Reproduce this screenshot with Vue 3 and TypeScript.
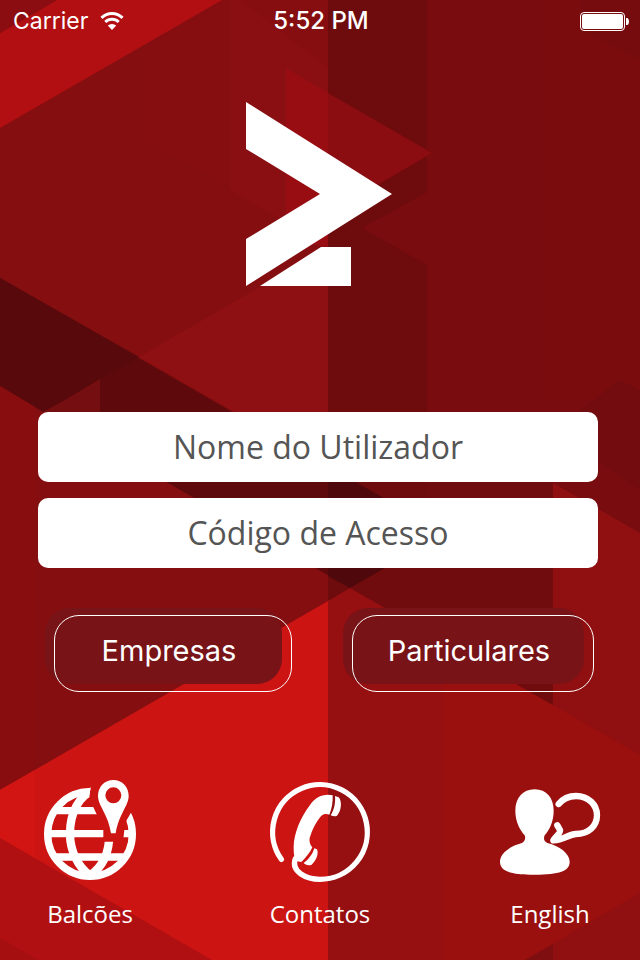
<script setup lang="ts">
import { ref } from 'vue'

interface Facet {
  points: string
  fill: string
}

const username = ref('')
const accessCode = ref('')

const facets: Facet[] = [
  { points: '0,0 328,0 328,960 0,960', fill: '#840e10' },
  { points: '145,0 328,0 328,247 200,170 145,140', fill: '#860e11' },
  { points: '230,0 328,0 328,247 286,222 230,190', fill: '#8a0f12' },
  { points: '240,0 328,0 328,68', fill: '#860e11' },
  { points: '328,0 427,0 427,600 328,600', fill: '#6e0b0d' },
  { points: '427,0 640,0 640,960 427,960', fill: '#780c0e' },
  { points: '545,0 640,0 640,400 545,400', fill: '#7b0c0e' },
  { points: '580,30 640,60 640,0 580,0', fill: '#760c0e' },
  { points: '0,33 57,0 222,0 0,128', fill: '#b20f12' },
  { points: '0,0 57,0 0,33', fill: '#8b0d11' },
  { points: '286,68 328,93 328,247 286,240', fill: '#980d12' },
  { points: '328,93 432,153 328,214', fill: '#8c0d11' },
  { points: '362,228 427,192 427,265', fill: '#780c0e' },
  { points: '139,357 328,247 328,466', fill: '#8f1012' },
  { points: '0,278 382,498 390,565 350,588 0,386', fill: '#5e0a0d' },
  { points: '0,278 139,357 43,412 0,386', fill: '#58090c' },
  { points: '328,466 427,523 427,544 350,588 328,576', fill: '#4f080b' },
  { points: '65,400 100,379 100,444 43,412', fill: '#750e10' },
  { points: '553,430 620,380 640,390 640,490', fill: '#720c0e' },
  { points: '427,430 553,430 553,705 350,588 427,544', fill: '#700c0e' },
  { points: '553,483 640,533 640,960 553,960', fill: '#900f11' },
  { points: '0,386 35,407 35,960 0,960', fill: '#870d0f' },
  { points: '0,790 328,601 328,960 0,960', fill: '#cc1413' },
  { points: '0,790 35,770 35,858 0,838', fill: '#d21512' },
  { points: '328,601 350,588 553,705 640,755 640,960 328,960', fill: '#960f11' },
  { points: '444,642 516,684 640,755 640,893 525,960 444,960', fill: '#9a100f' },
  { points: '516,684 553,705 553,660 516,660', fill: '#700c0e' },
  { points: '0,838 212,960 0,960', fill: '#b01011' },
  { points: '0,938 38,960 0,960', fill: '#a50f10' },
  { points: '525,960 553,944 553,960', fill: '#7e0e10' },
  { points: '553,944 640,893 640,960 553,960', fill: '#900f11' },
]
</script>

<template>
  <main class="screen">
    <svg class="backdrop" viewBox="0 0 640 960" preserveAspectRatio="xMidYMid slice" aria-hidden="true">
      <polygon v-for="(f, i) in facets" :key="i" :points="f.points" :fill="f.fill" />
    </svg>

    <header class="status">
      <div class="carrier">
        <span>Carrier</span>
        <svg class="wifi" viewBox="0 0 24 18" aria-hidden="true">
          <path d="M1.500 5.900A15 15 0 0 1 22.500 5.900" fill="none" stroke="#fff" stroke-width="3" />
          <path d="M5.300 10A9.500 9.500 0 0 1 18.700 10" fill="none" stroke="#fff" stroke-width="3" />
          <path d="M12 18 7.800 13.600A6 6 0 0 1 16.200 13.600Z" fill="#fff" />
        </svg>
      </div>
      <time class="clock">5:52 PM</time>
      <svg class="battery" viewBox="0 0 49 20" aria-hidden="true">
        <rect x="0.500" y="1.500" width="44" height="18" rx="3.500" fill="none" stroke="#fff" />
        <rect x="2" y="3" width="41" height="15" rx="2" fill="#fff" />
        <path d="M46 7h1.500q1.500 1 1.500 3.500t-1.500 3.500h-1.500z" fill="#fff" />
      </svg>
    </header>

    <svg class="logo" viewBox="0 0 146 184" role="img" aria-label="Logo">
      <path d="M0 0 146 92 0 184V137L74 92 0 47Z" fill="#fff" />
      <path d="M14 184 75 145H105V184Z" fill="#fff" />
    </svg>

    <form class="login" @submit.prevent>
      <input v-model="username" class="field" type="text" placeholder="Nome do Utilizador" aria-label="Nome do Utilizador" />
      <input v-model="accessCode" class="field" type="password" placeholder="Código de Acesso" aria-label="Código de Acesso" />
      <div class="actions">
        <button class="action" type="submit"><span>Empresas</span></button>
        <button class="action" type="submit"><span>Particulares</span></button>
      </div>
    </form>

    <nav class="links">
      <a class="link" href="#balcoes">
        <svg class="icon" viewBox="30 30 300 300" aria-hidden="true">
          <defs>
            <clipPath id="pin-gap">
              <path
                clip-rule="evenodd"
                d="M0 0H360V360H0ZM184 30 182 52 178 78 190 112 200 133 220 180 220 215 256 215 280 206 283 180 289 152 304 126 350 30Z"
              />
            </clipPath>
          </defs>
          <g clip-path="url(#pin-gap)" fill="none" stroke="#fff" stroke-width="22">
            <circle cx="180" cy="192" r="127" />
            <path d="M78 122H215M50 191H310M70 261H290" />
            <path
              d="M190 62C148 76 120 128 120 191C120 244 145 292 180 316M180 316C222 288 238 242 238 192"
              stroke-width="25"
            />
          </g>
          <path
            fill="#fff"
            fill-rule="evenodd"
            d="M250 30C276 30 296 50 296 77C296 108 266 132 257 190H243C235 132 204 108 204 77C204 50 224 30 250 30ZM250 52A24 24 0 1 0 250 100A24 24 0 1 0 250 52Z"
          />
        </svg>
        <span>Balcões</span>
      </a>
      <a class="link" href="#contatos">
        <svg class="icon" viewBox="30 30 300 300" aria-hidden="true">
          <path
            fill="none"
            stroke="#fff"
            stroke-width="16"
            stroke-linecap="round"
            d="M64 268A142 142 0 1 1 180 328C140 328 92 306 106 266"
          />
          <g fill="#fff">
            <path
              d="M218 76C190 70 165 82 150 105C120 145 102 190 101 230C101 255 103 268 112 274L124 276C138 262 150 248 157 232C148 222 146 208 152 195C160 172 172 150 186 136C194 130 202 132 208 134C215 118 219 98 218 76Z"
            />
            <path d="M225 78 236 82C248 95 243 125 231 137C224 140 215 138 212 136C222 120 227 100 225 78Z" />
            <path d="M163 235 171 238C177 252 168 272 155 284C145 288 135 284 131 279C146 268 158 252 163 235Z" />
          </g>
        </svg>
        <span>Contatos</span>
      </a>
      <a class="link" href="#english">
        <svg class="icon" viewBox="30 30 300 300" aria-hidden="true">
          <path
            fill="#fff"
            d="M134 58C98 58 76 84 76 122C76 155 90 180 104 196C108 206 104 214 96 219C60 228 30 250 30 275C30 303 60 314 134 314C208 314 239 303 239 275C239 250 208 228 172 219C162 214 160 206 164 196C178 180 191 155 191 122C191 84 170 58 134 58Z"
          />
          <path
            fill="none"
            stroke="#fff"
            stroke-width="19"
            stroke-linecap="round"
            stroke-linejoin="round"
            d="M206 102C220 85 240 78 258 78C295 78 321 104 321 136C321 168 296 192 258 192C235 193 222 210 190 211C195 200 213 190 210 180L202 166"
          />
        </svg>
        <span>English</span>
      </a>
    </nav>
  </main>
</template>

<style>
body {
  margin: 0;
  background: #840e10;
}
</style>

<style scoped>
.screen {
  position: relative;
  display: flex;
  flex-direction: column;
  min-height: 100vh;
  box-sizing: border-box;
  overflow: hidden;
  isolation: isolate;
  color: #fff;
  font-family: 'Open Sans', 'Noto Sans', sans-serif;
}

.backdrop {
  position: absolute;
  inset: 0;
  z-index: -1;
  width: 100%;
  height: 100%;
}

.status {
  display: grid;
  grid-template-columns: 1fr auto 1fr;
  align-items: center;
  height: 40px;
  padding: 0 11px 0 13px;
  font-family: Inter, Roboto, sans-serif;
  font-size: 23px;
  line-height: 42px;
}

.carrier {
  display: flex;
  align-items: center;
  gap: 12px;
}

.wifi {
  width: 24px;
  height: 18px;
}

.clock {
  font-size: 24px;
  font-weight: 500;
}

.battery {
  width: 49px;
  height: 20px;
  justify-self: end;
}

.logo {
  width: 146px;
  height: 184px;
  margin: 62px auto 0;
  padding-right: 2px;
}

.login {
  display: flex;
  flex-direction: column;
  gap: 16px;
  margin-top: 126px;
  padding: 0 42px 0 38px;
}

.field {
  box-sizing: border-box;
  width: 100%;
  height: 70px;
  padding: 0 2px 2px;
  border: 0;
  border-radius: 10px;
  background: #fff;
  color: #555;
  font-family: inherit;
  font-size: 32px;
  text-align: center;
}

.field::placeholder {
  color: #555;
  opacity: 1;
}

.actions {
  display: grid;
  grid-template-columns: 119fr 121fr;
  gap: 60px;
  margin-top: 31px;
  padding: 0 4px 0 16px;
}

.action {
  position: relative;
  height: 77px;
  padding: 0 8px 6px 0;
  border: 1px solid #fff;
  border-radius: 25px;
  background: none;
  color: #fff;
  font-family: Inter, Roboto, sans-serif;
  font-size: 29px;
}

.action::before {
  content: '';
  position: absolute;
  z-index: -1;
  inset: -8px 9px 7px -10px;
  border-radius: 25px;
  background: #781317;
}

.links {
  display: flex;
  justify-content: space-between;
  margin-top: auto;
  padding: 0 40px 30px;
}

.link {
  display: flex;
  flex-direction: column;
  align-items: center;
  gap: 18px;
  width: 100px;
  color: #fff;
  font-size: 24px;
  line-height: 32px;
  text-decoration: none;
}

.icon {
  width: 100px;
  height: 100px;
  overflow: visible;
}
</style>
